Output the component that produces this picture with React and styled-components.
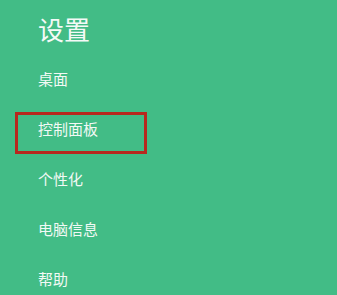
import React from "react";
import styled, { createGlobalStyle } from "styled-components";

const Global = createGlobalStyle`
  html, body { margin: 0; padding: 0; background: #42bc86; }
  body { font-family: "Noto Sans CJK SC", "Noto Sans", sans-serif; }
`;

const Panel = styled.div`
  width: 337px;
  height: 295px;
  background: #42bc86;
  box-sizing: border-box;
  padding: 13px 0 0 15px;
  overflow: hidden;
`;

const Title = styled.h1`
  margin: 0 0 0 23px;
  font-size: 26px;
  font-weight: 400;
  line-height: 32px;
  color: #f4faf7;
`;

const Menu = styled.ul`
  list-style: none;
  margin: 17px 0 0 0;
  padding: 0;
  display: flex;
  flex-direction: column;
  gap: 8px;
`;

const Item = styled.li`
  box-sizing: border-box;
  width: 132px;
  height: 42px;
  padding: 0 0 9px 20px;
  display: flex;
  align-items: center;
  border: 3px solid ${(p) => (p.$active ? "#b8281e" : "transparent")};
  font-size: 15px;
  color: #f2f9f5;
  line-height: 1;
`;

const items = ["桌面", "控制面板", "个性化", "电脑信息", "帮助"];

export default function App() {
  return (
    <>
      <Global />
      <Panel>
        <Title>设置</Title>
        <Menu>
          {items.map((t, i) => (
            <Item key={t} $active={i === 1}>
              {t}
            </Item>
          ))}
        </Menu>
      </Panel>
    </>
  );
}
